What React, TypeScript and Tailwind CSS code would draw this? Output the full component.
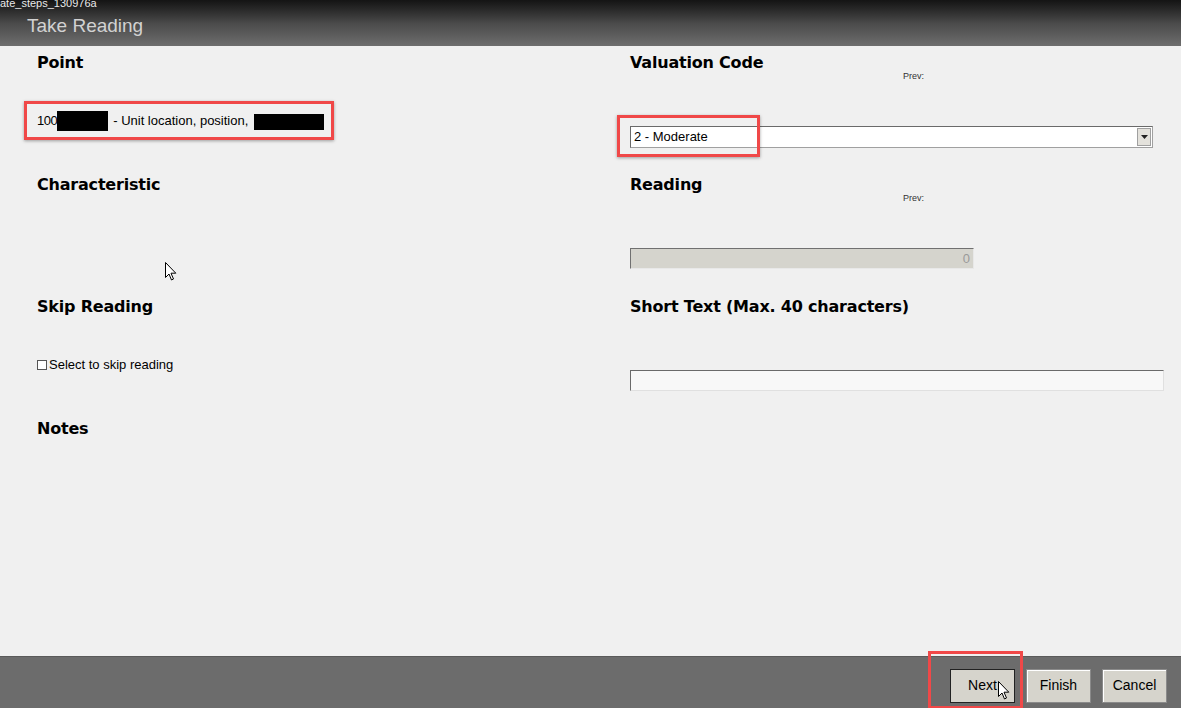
const label = "text-[16px] font-bold text-black leading-none [font-family:'DejaVu_Sans',Verdana,sans-serif] tracking-[-0.2px]";
const prev = "text-[9px] text-[#333] leading-none";

function Cursor({ className }: { className?: string }) {
  return (
    <svg className={className} width="12" height="19" viewBox="0 0 12 19">
      <path
        d="M0.5 0.5 L0.5 15.5 L4 12 L6.5 18 L8.5 17 L6 11.2 L10.8 11.2 Z"
        fill="#fff"
        stroke="#000"
        strokeWidth="1"
        strokeLinejoin="miter"
      />
    </svg>
  );
}

function Redact({ w, h }: { w: number; h: number }) {
  return <span className="inline-block bg-black align-middle" style={{ width: w, height: h }} />;
}

export default function App() {
  return (
    <div
      className="flex h-[708px] w-[1181px] flex-col overflow-hidden bg-[#f0f0f0]"
      style={{ fontFamily: '"Liberation Sans", Arial, sans-serif' }}
    >
      {/* title bar */}
      <div className="relative flex h-[46px] shrink-0 items-end bg-gradient-to-b from-[#141414] via-[#4a4a4a] to-[#6e6e6e] pb-[11px] pl-[27px]">
        <span className="absolute left-0 top-[-5px] text-[11px] text-[#e8e8e8]">ate_steps_130976a</span>
        <span className="text-[19px] leading-none text-[#d2d2d2]">Take Reading</span>
      </div>

      {/* form */}
      <div className="grid flex-1 grid-cols-[593px_1fr] content-start pl-[37px] pt-[9px]">
        {/* Point */}
        <div className="h-[122px]">
          <div className={label}>Point</div>
          <div className="relative mt-[40px] flex items-center text-[13px] text-black">
            <span className="pointer-events-none absolute left-[-13px] top-[-10px] h-[39px] w-[310px] border-[3px] border-[#f04848] shadow-[0_1px_3px_rgba(0,0,0,0.35)]" />
            <span className="tracking-[-0.5px]">100</span>
            <Redact w={51} h={20} />
            <span className="ml-[5px]">- Unit location, position,</span>
            <span className="ml-[6px]">
              <Redact w={70} h={16} />
            </span>
          </div>
        </div>

        {/* Valuation Code */}
        <div className="h-[122px] pr-[28px]">
          <div className={label}>Valuation Code</div>
          <div className={`${prev} ml-[273px] mt-[1px]`}>Prev:</div>
          <div className="relative mt-[45px] flex h-[22px] items-center border border-[#a0a0a0] border-l-[#6a6a6a] border-t-[#6a6a6a] bg-white">
            <span className="pointer-events-none absolute left-[-14px] top-[-12px] h-[42px] w-[143px] border-[3px] border-[#f04848] shadow-[0_1px_3px_rgba(0,0,0,0.35)]" />
            <span className="flex-1 pl-[3px] text-[13px] text-black">2 - Moderate</span>
            <span className="mr-[1px] flex h-[18px] w-[14px] items-center justify-center border border-[#a0a0a0] bg-[#e4e2dc]">
              <svg width="7" height="4" viewBox="0 0 7 4">
                <path d="M0 0 H7 L3.5 4 Z" fill="#222" />
              </svg>
            </span>
          </div>
        </div>

        {/* Characteristic */}
        <div className="relative h-[122px]">
          <div className={label}>Characteristic</div>
          <Cursor className="absolute left-[128px] top-[85px]" />
        </div>

        {/* Reading */}
        <div className="h-[122px]">
          <div className={label}>Reading</div>
          <div className={`${prev} ml-[273px] mt-[1px]`}>Prev:</div>
          <div className="mt-[45px] flex h-[21px] w-[344px] items-center justify-end border border-[#e8e8e8] border-l-[#707070] border-t-[#707070] bg-[#d5d4cd] pr-[3px] text-[13px] text-[#9a9a9a]">
            0
          </div>
        </div>

        {/* Skip Reading */}
        <div className="h-[122px]">
          <div className={label}>Skip Reading</div>
          <label className="mt-[40px] flex items-center gap-[2px] text-[13px] text-black">
            <span className="inline-block h-[10px] w-[10px] border border-[#555] bg-white" />
            Select to skip reading
          </label>
        </div>

        {/* Short Text */}
        <div className="h-[122px] pr-[17px]">
          <div className={label}>Short Text (Max. 40 characters)</div>
          <div className="mt-[55px] h-[21px] border border-[#e0e0e0] border-l-[#6a6a6a] border-t-[#6a6a6a] bg-[#f8f8f8]" />
        </div>

        {/* Notes */}
        <div className="h-[122px]">
          <div className={label}>Notes</div>
        </div>
        <div />
      </div>

      {/* footer */}
      <div className="flex h-[52px] shrink-0 items-center justify-end gap-[11px] border-t border-[#5a5a5a] bg-[#6c6c6c] pr-[14px] pt-[6px]">
        <div className="relative">
          <span className="pointer-events-none absolute left-[-22px] top-[-18px] h-[58px] w-[95px] border-[3px] border-[#f04848]" />
          <button className="flex h-[34px] w-[65px] items-center justify-center border border-[#222] bg-[#d6d4cc] text-[14px] text-black">
            Next
          </button>
          <Cursor className="absolute left-[48px] top-[12px]" />
        </div>
        <button className="flex h-[34px] w-[65px] items-center justify-center border border-[#8a8a8a] bg-[#d6d4cc] text-[14px] text-black shadow-[inset_1px_1px_0_#fff]">
          Finish
        </button>
        <button className="flex h-[34px] w-[65px] items-center justify-center border border-[#8a8a8a] bg-[#d6d4cc] text-[14px] text-black shadow-[inset_1px_1px_0_#fff]">
          Cancel
        </button>
      </div>
    </div>
  );
}
